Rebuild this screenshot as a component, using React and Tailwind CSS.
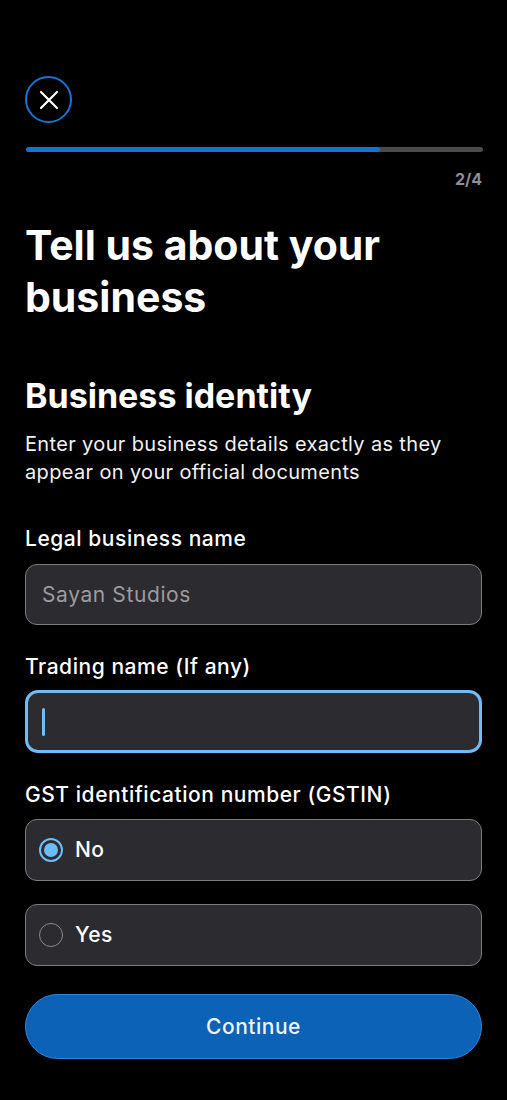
export default function App() {
  const font = { fontFamily: 'Inter, "Noto Sans", sans-serif' };
  return (
    <div className="min-h-[1100px] w-[507px] bg-black text-white" style={font}>
      <div className="px-[25px] pt-[76px]">
        <button className="flex h-[47px] w-[47px] items-center justify-center rounded-full border-2 border-[#1a72d4]">
          <svg width="22" height="22" viewBox="0 0 22 22" fill="none" stroke="white" strokeWidth="2.2" strokeLinecap="round">
            <path d="M3 3L19 19M19 3L3 19" />
          </svg>
        </button>
        <div className="mt-[24px] flex h-[5px] w-full overflow-hidden rounded-full bg-[#4a4a4a] ml-[1px]">
          <div className="h-full w-[354px] rounded-full bg-[#1673cc]" />
        </div>
        <div className="mt-[17px] text-right text-[16px] font-bold leading-[20px] text-[#8e8e93]">2/4</div>
        <h1 className="mt-[30px] text-[41px] font-bold leading-[52px]">Tell us about your business</h1>
        <h2 className="mt-[53px] text-[34px] font-bold leading-[40px]">Business identity</h2>
        <p className="mt-[14px] text-[20px] leading-[28px] tracking-[0.35px] text-[#f2f2f2]">Enter your business details exactly as they appear on your official documents</p>

        <label className="mt-[40px] block text-[21px] font-medium leading-[26px] tracking-[0.55px]">Legal business name</label>
        <div className="mt-[12px] flex h-[61px] items-center rounded-[12px] border-[1.5px] border-[#7c7b80] bg-[#2c2b30] px-[16px] text-[21px] tracking-[0.6px] text-[#9c9ba0]">Sayan Studios</div>

        <label className="mt-[29px] block text-[21px] font-medium leading-[26px] tracking-[0.55px]">Trading name (If any)</label>
        <div className="mt-[10px] flex h-[63px] items-center rounded-[13px] border-[3px] border-[#6cbdf8] bg-[#2c2b30] px-[14px]">
          <div className="h-[28px] w-[3px] rounded-full bg-[#6cbdf8]" />
        </div>

        <label className="mt-[29px] block text-[21px] font-medium leading-[26px] tracking-[0.55px]">GST identification number (GSTIN)</label>
        <div className="mt-[11px] flex h-[62px] items-center gap-[12px] rounded-[12px] border-[1.5px] border-[#7c7b80] bg-[#2c2b30] px-[13px]">
          <div className="flex h-[24px] w-[24px] items-center justify-center rounded-full border-[2px] border-[#6cbdf8]">
            <div className="h-[14px] w-[14px] rounded-full bg-[#6cbdf8]" />
          </div>
          <span className="text-[21px] font-medium tracking-[0.4px]">No</span>
        </div>
        <div className="mt-[23px] flex h-[62px] items-center gap-[12px] rounded-[12px] border-[1.5px] border-[#7c7b80] bg-[#2c2b30] px-[13px]">
          <div className="h-[24px] w-[24px] rounded-full border-[1.5px] border-[#8a8a8e]" />
          <span className="text-[21px] font-medium tracking-[0.4px]">Yes</span>
        </div>

        <button className="mt-[28px] flex h-[65px] w-full items-center justify-center rounded-full border border-[#2f86dd] bg-[#0b62b6] text-[21px] font-medium tracking-[0.5px] text-[#f0f4fa]">Continue</button>
      </div>
    </div>
  );
}
